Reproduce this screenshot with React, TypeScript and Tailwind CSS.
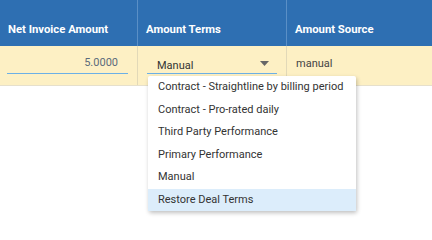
import React from "react";

const headers = [
  { label: "Net Invoice Amount", width: "w-[138px]" },
  { label: "Amount Terms", width: "w-[149px]" },
  { label: "Amount Source", width: "flex-1" },
];

const options = [
  "Contract - Straightline by billing period",
  "Contract - Pro-rated daily",
  "Third Party Performance",
  "Primary Performance",
  "Manual",
  "Restore Deal Terms",
];

const App: React.FC = () => {
  return (
    <div
      className="relative w-[432px] h-[218px] overflow-hidden bg-white"
      style={{ fontFamily: "Roboto, 'Liberation Sans', sans-serif" }}
    >
      <div className="flex h-[46px] bg-[#2e6fb2]">
        {headers.map((h, i) => (
          <div
            key={i}
            className={`${h.width} flex items-end pb-[7px] pl-[8px] text-[11.3px] font-bold text-white ${
              i < 2 ? "border-r border-[#5a8fc6]" : ""
            }`}
          >
            {h.label}
          </div>
        ))}
      </div>

      <div className="flex h-[40px] bg-[#fdf0c4] border-b border-[#e6e0cc]">
        <div className="w-[138px] border-r border-[#e2d9b8] flex items-end pb-[11px] pl-[7px]">
          <div className="w-[121px] h-[22px] border-b border-[#6cb0e6] flex items-center justify-end pr-[10px] pt-[2px] text-[11px] text-[#5b6b7b]">
            5.0000
          </div>
        </div>
        <div className="w-[149px] border-r border-[#e2d9b8] flex items-end pb-[11px] pl-[9px]">
          <div className="w-[130px] h-[20px] border-b border-[#6cb0e6] flex items-center justify-between pl-[10px] pr-[8px] pt-[5px] text-[11px] text-[#333]">
            <span>Manual</span>
            <svg width="9" height="5" viewBox="0 0 9 5" className="-mt-[5px]">
              <path d="M0 0 L9 0 L4.5 5 Z" fill="#666" />
            </svg>
          </div>
        </div>
        <div className="flex-1 pl-[9px] pt-[10px] text-[11px] text-[#444]">manual</div>
      </div>

      <div className="absolute left-[148px] top-[76px] w-[208px] bg-white shadow-[1px_2px_4px_rgba(0,0,0,0.25)] rounded-[2px]">
        {options.map((o, i) => (
          <div
            key={i}
            className={`h-[22.5px] flex items-center pl-[10px] whitespace-nowrap text-[11px] text-[#333] ${
              i === options.length - 1 ? "bg-[#dcedfb]" : ""
            }`}
          >
            {o}
          </div>
        ))}
      </div>
    </div>
  );
};

export default App;
